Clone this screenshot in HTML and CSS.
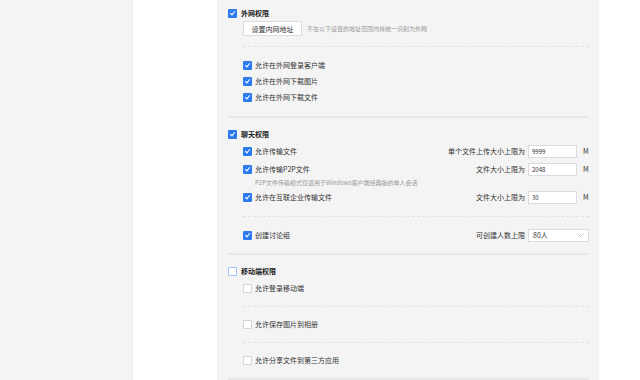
FILE: index.html
```html
<!DOCTYPE html>
<html lang="zh-CN">

<head>
    <meta charset="UTF-8">
    <meta name="viewport" content="width=device-width, initial-scale=1.0">
    <title>权限设置</title>
    <link rel="stylesheet" href="styles.css">
</head>

<body>
    <div class="page">
        <div class="side"></div>
        <div class="nav"></div>
        <div class="panel">
            <!-- 外网权限 -->
            <div class="head-row">
                <span class="box on"></span>
                <span class="head-title">外网权限</span>
            </div>
            <div class="btn-row">
                <button class="plain-btn">设置内网地址</button>
                <span class="hint">不在以下设置的地址范围内将统一识别为外网</span>
            </div>
            <div class="dash first-dash"></div>
            <div class="sub">
                <div class="row"><span class="box on"></span><span>允许在外网登录客户端</span></div>
                <div class="row"><span class="box on"></span><span>允许在外网下载图片</span></div>
                <div class="row"><span class="box on"></span><span>允许在外网下载文件</span></div>
            </div>
            <div class="line first-line"></div>

            <!-- 聊天权限 -->
            <div class="head-row">
                <span class="box on"></span>
                <span class="head-title">聊天权限</span>
            </div>
            <div class="sub tall">
                <div class="row">
                    <span class="box on"></span><span>允许传输文件</span>
                    <div class="limit">
                        <span>单个文件上传大小上限为</span>
                        <input class="num" type="text" value="9999">
                        <span class="unit">M</span>
                    </div>
                </div>
                <div class="row">
                    <span class="box on"></span><span>允许传输P2P文件</span>
                    <div class="limit">
                        <span>文件大小上限为</span>
                        <input class="num" type="text" value="2048">
                        <span class="unit">M</span>
                    </div>
                </div>
                <div class="note">P2P文件传输模式仅适用于Windows客户端经典版的单人会话</div>
                <div class="row">
                    <span class="box on"></span><span>允许在互联企业传输文件</span>
                    <div class="limit">
                        <span>文件大小上限为</span>
                        <input class="num" type="text" value="30">
                        <span class="unit">M</span>
                    </div>
                </div>
                <div class="dash chat-dash"></div>
                <div class="row">
                    <span class="box on"></span><span>创建讨论组</span>
                    <div class="limit">
                        <span>可创建人数上限</span>
                        <div class="select">
                            <span>80人</span>
                            <svg width="7" height="4" viewBox="0 0 7 4"><path d="M0.5 0.5 L3.5 3.5 L6.5 0.5" fill="none" stroke="#bbb" stroke-width="0.8"/></svg>
                        </div>
                    </div>
                </div>
            </div>
            <div class="line"></div>

            <!-- 移动端权限 -->
            <div class="head-row">
                <span class="box off head-off"></span>
                <span class="head-title">移动端权限</span>
            </div>
            <div class="sub tall">
                <div class="row"><span class="box off"></span><span>允许登录移动端</span></div>
                <div class="dash"></div>
                <div class="row"><span class="box off"></span><span>允许保存图片到相册</span></div>
                <div class="dash"></div>
                <div class="row"><span class="box off"></span><span>允许分享文件到第三方应用</span></div>
            </div>
            <div class="line"></div>
        </div>
        <div class="rest"></div>
    </div>
</body>

</html>
```

FILE: styles.css
```css
body {
    margin: 0;
    font-family: "Noto Sans CJK SC", "Noto Sans", sans-serif;
    font-size: 7px;
    color: #333;
    background-color: #fff;
}

.page {
    display: flex;
    height: 380px;
    overflow: hidden;
}

.side {
    width: 132px;
    background-color: #f5f5f5;
    border-right: 1px solid #ebebeb;
}

.nav {
    width: 84px;
    background-color: #fff;
}

.panel {
    width: 361px;
    background-color: #f4f4f4;
    padding: 5px 10px 0 10px;
    border-left: 1px solid #f0f0f0;
}

.rest {
    flex: 1;
    background-color: #fff;
}

.head-row {
    display: flex;
    align-items: center;
    height: 16px;
}

.head-title {
    font-weight: bold;
    margin-left: 4px;
    color: #222;
}

.box {
    width: 9px;
    height: 9px;
    box-sizing: border-box;
    border-radius: 1px;
    flex-shrink: 0;
    position: relative;
}

.box.on {
    background-color: #2b7af0;
}

.box.on::after {
    content: "";
    position: absolute;
    left: 3px;
    top: 1px;
    width: 2px;
    height: 4px;
    border-right: 1px solid #fff;
    border-bottom: 1px solid #fff;
    transform: rotate(40deg);
}

.box.off {
    background-color: #fff;
    border: 1px solid #d4d4d4;
}

.box.head-off {
    border-color: #9ec3f3;
}

.btn-row {
    display: flex;
    align-items: center;
    margin-left: 15px;
}

.plain-btn {
    width: 59px;
    height: 15px;
    padding: 0;
    background-color: #fff;
    border: 1px solid #dcdcdc;
    border-radius: 1px;
    font-family: inherit;
    font-size: 7px;
    color: #333;
}

.hint {
    margin-left: 5px;
    font-size: 6px;
    color: #999;
}

.sub {
    margin-left: 15px;
}

.dash {
    height: 0;
    border-top: 1px dashed #e2e2e2;
    margin: 9px 0 8px 0;
}

.first-dash {
    margin: 10px 0 10px 15px;
}

.chat-dash {
    margin: 10px 0 9px 0;
}

.line {
    height: 2px;
    background-color: #e8e8e8;
    margin: 9px 0 8px 0;
}

.first-line {
    margin-top: 11px;
}

.row {
    display: flex;
    align-items: center;
    height: 16px;
}

.tall .row {
    height: 18px;
}

.row .box {
    margin-right: 3px;
}

.note {
    margin-left: 12px;
    font-size: 6px;
    color: #999;
    height: 10px;
    line-height: 10px;
}

.limit {
    margin-left: auto;
    display: flex;
    align-items: center;
}

.num {
    width: 49px;
    height: 13px;
    box-sizing: border-box;
    margin-left: 3px;
    padding: 0 3px;
    border: 1px solid #dcdcdc;
    background-color: #fff;
    font-family: inherit;
    font-size: 6px;
    color: #333;
    outline: none;
}

.unit {
    margin-left: 6px;
    width: 6px;
}

.select {
    width: 61px;
    height: 13px;
    box-sizing: border-box;
    margin-left: 3px;
    padding: 0 4px;
    border: 1px solid #dcdcdc;
    background-color: #fff;
    display: flex;
    align-items: center;
    justify-content: space-between;
}
```
